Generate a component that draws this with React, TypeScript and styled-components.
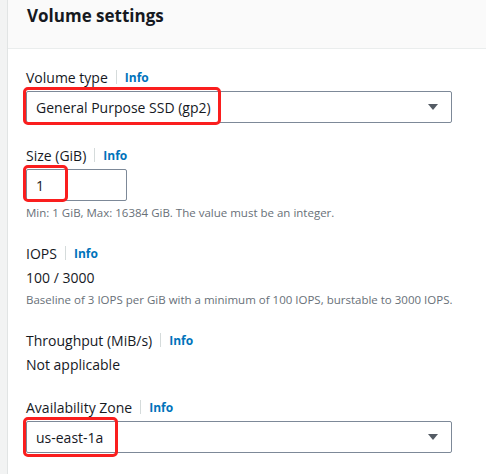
import React from "react";
import styled, { createGlobalStyle } from "styled-components";

const GlobalStyle = createGlobalStyle`
  body {
    margin: 0;
    background: #ffffff;
    font-family: "Open Sans", "Noto Sans", sans-serif;
    color: #16191f;
  }
`;

const Page = styled.div`
  display: flex;
  width: 486px;
  height: 474px;
  overflow: hidden;
`;

const Rail = styled.div`
  width: 7px;
  flex-shrink: 0;
  background: #f2f3f3;
  border-right: 1px solid #e1e4e4;
`;

const Panel = styled.div`
  flex: 1;
  display: flex;
  flex-direction: column;
`;

const Header = styled.div`
  height: 49px;
  box-sizing: border-box;
  background: #fafafa;
  border-bottom: 1px solid #eaeded;
  padding: 5px 0 0 19px;
`;

const Title = styled.h2`
  margin: 0;
  font-size: 17px;
  line-height: 22px;
  font-weight: 700;
  color: #16191f;
`;

const Form = styled.div`
  display: flex;
  flex-direction: column;
  gap: 22px;
  padding: 18px 36px 0 18px;
`;

const Field = styled.div`
  display: flex;
  flex-direction: column;
`;

const LabelRow = styled.div`
  display: flex;
  align-items: center;
  height: 20px;
  font-size: 14px;
`;

const Divider = styled.span`
  width: 1px;
  height: 14px;
  background: #d5dbdb;
  margin: 0 8px;
`;

const InfoLink = styled.a`
  font-size: 12px;
  font-weight: 700;
  color: #0073bb;
  text-decoration: none;
`;

const Control = styled.div<{ $width?: number }>`
  position: relative;
  margin-top: 4px;
  width: ${(p) => (p.$width ? `${p.$width}px` : "100%")};
`;

const SelectBox = styled.div`
  display: flex;
  align-items: center;
  justify-content: space-between;
  height: 32px;
  box-sizing: border-box;
  border: 1px solid #7d8998;
  border-radius: 2px;
  padding: 0 12px 0 9px;
  font-size: 14px;
`;

const InputBox = styled.div`
  display: flex;
  align-items: center;
  height: 32px;
  box-sizing: border-box;
  border: 1px solid #7d8998;
  border-radius: 2px;
  padding: 0 9px;
  font-size: 14px;
`;

const Highlight = styled.div<{ $width: number; $height: number }>`
  position: absolute;
  left: -3px;
  top: -4px;
  width: ${(p) => p.$width}px;
  height: ${(p) => p.$height}px;
  box-sizing: border-box;
  border: 3px solid #fa1e1e;
  border-radius: 5px;
  pointer-events: none;
`;

const Value = styled.div`
  margin-top: 5px;
  font-size: 14px;
  line-height: 20px;
`;

const Hint = styled.div`
  margin-top: 4px;
  font-size: 11.5px;
  line-height: 16px;
  color: #687078;
  white-space: nowrap;
`;

const Caret = () => (
  <svg width="12" height="8" viewBox="0 0 12 8">
    <path d="M1 1h10L6 7z" fill="#545b64" />
  </svg>
);

const Label = ({ text }: { text: string }) => (
  <LabelRow>
    <span>{text}</span>
    <Divider />
    <InfoLink href="#">Info</InfoLink>
  </LabelRow>
);

export default function App() {
  return (
    <Page>
      <GlobalStyle />
      <Rail />
      <Panel>
        <Header>
          <Title>Volume settings</Title>
        </Header>
        <Form>
          <Field>
            <Label text="Volume type" />
            <Control>
              <SelectBox>
                <span>General Purpose SSD (gp2)</span>
                <Caret />
              </SelectBox>
              <Highlight $width={198} $height={38} />
            </Control>
          </Field>

          <Field>
            <Label text="Size (GiB)" />
            <Control $width={101}>
              <InputBox>1</InputBox>
              <Highlight $width={45} $height={37} />
            </Control>
            <Hint>Min: 1 GiB, Max: 16384 GiB. The value must be an integer.</Hint>
          </Field>

          <Field>
            <Label text="IOPS" />
            <Value>100 / 3000</Value>
            <Hint>
              Baseline of 3 IOPS per GiB with a minimum of 100 IOPS, burstable to 3000 IOPS.
            </Hint>
          </Field>

          <Field>
            <Label text="Throughput (MiB/s)" />
            <Value>Not applicable</Value>
          </Field>

          <Field>
            <Label text="Availability Zone" />
            <Control>
              <SelectBox>
                <span>us-east-1a</span>
                <Caret />
              </SelectBox>
              <Highlight $width={95} $height={40} />
            </Control>
          </Field>
        </Form>
      </Panel>
    </Page>
  );
}
